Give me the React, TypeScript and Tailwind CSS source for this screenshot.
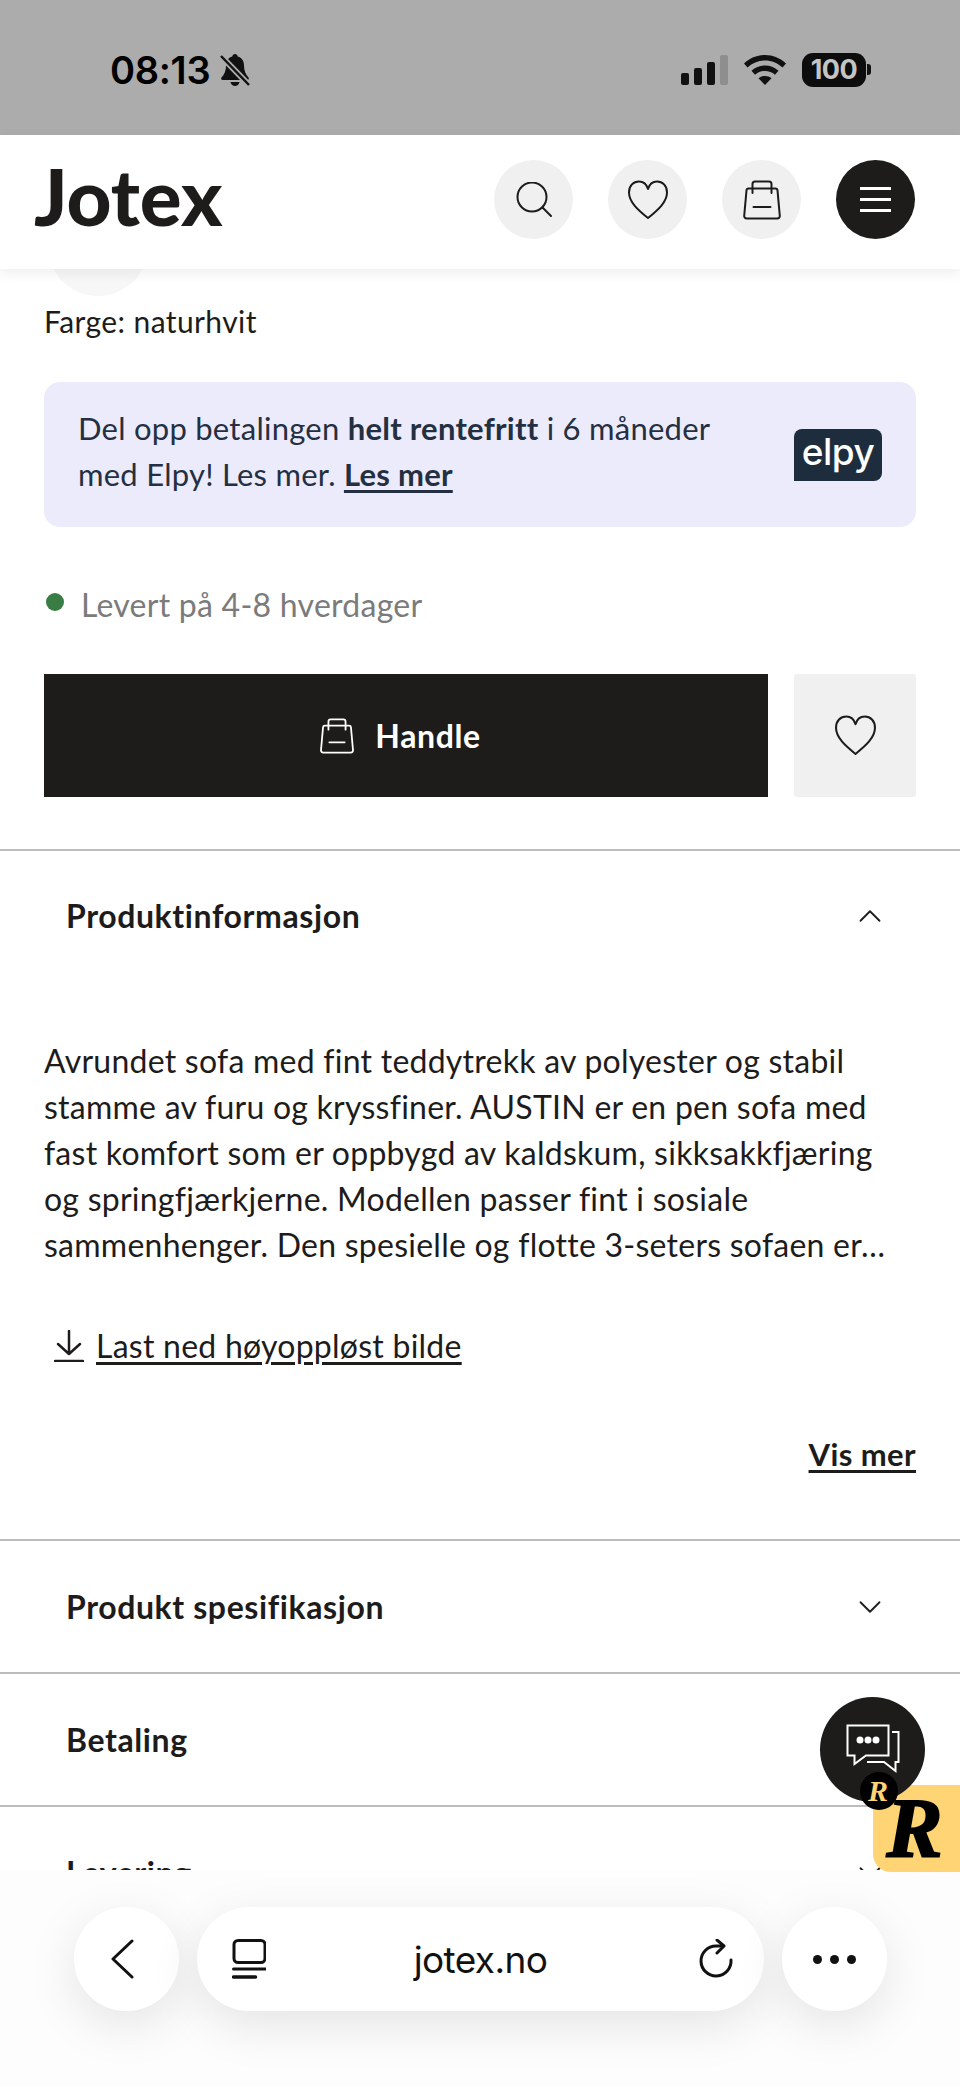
import { ChevronDown, ChevronUp } from 'lucide-react'

const Heart = ({ className }: { className?: string }) => (
  <svg viewBox="0 0 40 40" fill="none" stroke="currentColor" strokeWidth="2" strokeLinejoin="round" className={className}>
    <path d="M20 38C10 30 1 22 1 12.5 1 5.5 5.5 1.5 11 1.5c4.500 0 7.500 2.500 9 7.500 1.500-5 4.500-7.500 9-7.500 5.500 0 10 4 10 11C39 22 30 30 20 38Z" />
  </svg>
)

const Bag = ({ className }: { className?: string }) => (
  <svg viewBox="0 0 40 40" fill="none" stroke="currentColor" strokeWidth="2" strokeLinecap="round" strokeLinejoin="round" className={className}>
    <path d="M6.500 8.500h27a2 2 0 0 1 2 1.800l2.300 25.500a2.500 2.500 0 0 1-2.500 2.700H4.700a2.500 2.500 0 0 1-2.500-2.700L4.500 10.300a2 2 0 0 1 2-1.800Z" />
    <path d="M10.500 13V4a2.500 2.500 0 0 1 2.500-2.500h14a2.500 2.500 0 0 1 2.500 2.500v9" />
    <path d="M11.500 27h17" />
  </svg>
)

function StatusBar() {
  return (
    <div className="h-[135px] bg-[#acacac] flex items-center justify-between pl-[110px] pr-[89px] pt-[4px] text-black shrink-0">
      <div className="flex items-center gap-[9px]">
        <span className="text-[38px] font-semibold leading-none tracking-[-0.3px] font-['Inter',sans-serif]">08:13</span>
        <svg viewBox="0 0 32 34" className="w-[32px] h-[34px]" fill="#111">
          <path d="M16 1c-1.500 0-2.500 1-2.700 2.400C9 4.600 7 8 7 12.500c0 5-1.500 9-4.500 12-.8.900-.2 2.500 1 2.500h25c1.200 0 1.800-1.600 1-2.500-3-3-4.500-7-4.500-12 0-4.500-2-7.900-6.300-9.100C18.500 2 17.500 1 16 1Z" />
          <path d="M11.500 29c.5 2.500 2.300 4 4.500 4s4-1.500 4.500-4Z" />
          <path d="M2 3l28 29" stroke="#acacac" strokeWidth="6" />
          <path d="M2 3l28 29" stroke="#111" strokeWidth="2.500" />
        </svg>
      </div>
      <div className="flex items-center">
        <div className="flex items-end gap-[5px] h-[30px]">
          <div className="w-[8px] h-[12px] bg-[#111] rounded-[2px]" />
          <div className="w-[8px] h-[17px] bg-[#111] rounded-[2px]" />
          <div className="w-[8px] h-[23px] bg-[#111] rounded-[2px]" />
          <div className="w-[8px] h-[30px] bg-[#8e8e8e] rounded-[2px]" />
        </div>
        <svg viewBox="0 0 42 30" className="w-[42px] h-[30px] ml-[16px]" fill="#111">
          <path d="M21 0C13 0 6 3 0 8.500l3.500 4C8.500 8 14.500 5.500 21 5.500S33.500 8 38.500 12.500l3.500-4C36 3 29 0 21 0Z" />
          <path d="M21 10.500c-5 0-9.500 1.800-13.500 5.200l3.500 4c2.800-2.400 6.200-3.700 10-3.700s7.200 1.300 10 3.700l3.500-4C30.500 12.300 26 10.500 21 10.500Z" />
          <path d="M21 21c-2.500 0-4.800.8-6.500 2.300L21 30l6.500-6.700C25.800 21.800 23.500 21 21 21Z" />
        </svg>
        <div className="flex items-center ml-[16px]">
          <div className="w-[64px] h-[34px] rounded-[11px] bg-[#0d0d0d] flex items-center justify-center text-[#c4c4c4] text-[27px] font-bold leading-none font-['Inter',sans-serif] tracking-[-0.5px]">
            100
          </div>
          <div className="w-[4px] h-[11px] bg-[#111] rounded-r-[3px] ml-[1px]" />
        </div>
      </div>
    </div>
  )
}

function Header() {
  return (
    <div className="relative z-10 h-[134px] bg-white shadow-[0_4px_12px_rgba(0,0,0,0.07)] flex items-center justify-between pl-[34px] pr-[45px] pb-[5px] shrink-0">
      <span className="text-[78px] font-black leading-none text-[#1d1c1b] mb-[8px] font-['Lato',sans-serif]">Jotex</span>
      <div className="flex items-center gap-[35px] text-[#1d1c1b]">
        <button className="w-[79px] h-[79px] rounded-full bg-[#f0f0f0] flex items-center justify-center">
          <svg viewBox="0 0 36 36" fill="none" stroke="currentColor" strokeWidth="2" strokeLinecap="round" className="w-[36px] h-[36px]">
            <circle cx="16" cy="15" r="14.500" />
            <path d="M26.500 25.500L35 34" />
          </svg>
        </button>
        <button className="w-[79px] h-[79px] rounded-full bg-[#f0f0f0] flex items-center justify-center">
          <Heart className="w-[40px] h-[40px]" />
        </button>
        <button className="w-[79px] h-[79px] rounded-full bg-[#f0f0f0] flex items-center justify-center">
          <Bag className="w-[40px] h-[40px]" />
        </button>
        <button className="w-[79px] h-[79px] rounded-full bg-[#1d1c1b] flex flex-col items-center justify-center gap-[8px]">
          <div className="w-[31px] h-[3px] bg-white" />
          <div className="w-[31px] h-[3px] bg-white" />
          <div className="w-[31px] h-[3px] bg-white" />
        </button>
      </div>
    </div>
  )
}

function AccordionRow({ title }: { title: string }) {
  return (
    <div className="h-[133px] border-t-2 border-[#bcbcbc] flex items-center justify-between pl-[66px] pr-[71px]">
      <span className="text-[32px] font-bold tracking-[0.6px] text-[#1d1c1b]">{title}</span>
      <ChevronDown className="w-[38px] h-[38px] text-[#1d1c1b]" strokeWidth={1.150} />
    </div>
  )
}

function BottomBar() {
  return (
    <div className="absolute left-0 right-0 bottom-0 h-[216px] bg-[#fdfdfd] z-20 flex items-start gap-[18px] pl-[74px] pt-[37px] text-[#111]">
      <button className="w-[105px] h-[104px] rounded-full bg-white shadow-[0_14px_50px_rgba(0,0,0,0.1)] flex items-center justify-center">
        <svg viewBox="0 0 24 40" fill="none" stroke="currentColor" strokeWidth="3" strokeLinecap="round" strokeLinejoin="round" className="w-[24px] h-[40px] mr-[10px]">
          <path d="M22 2L3 20l19 18" />
        </svg>
      </button>
      <div className="w-[567px] h-[104px] rounded-full bg-white shadow-[0_14px_50px_rgba(0,0,0,0.1)] flex items-center justify-between pl-[35px] pr-[31px]">
        <svg viewBox="0 0 34 40" fill="none" stroke="currentColor" strokeWidth="3" strokeLinecap="round" className="w-[34px] h-[40px]">
          <rect x="2" y="1.500" width="31" height="22" rx="4" />
          <path d="M1.500 30h32" />
          <path d="M1.500 38h22" strokeWidth="3.500" />
        </svg>
        <span className="text-[37px] leading-none font-['Inter',sans-serif] tracking-[-0.6px] mr-[4px]">jotex.no</span>
        <svg viewBox="0 0 34 40" fill="none" stroke="currentColor" strokeWidth="3" strokeLinecap="round" strokeLinejoin="round" className="w-[34px] h-[40px]">
          <path d="M32 21A15 15 0 1 1 17 7h7" />
          <path d="M18 1l7 6-7 7" />
        </svg>
      </div>
      <button className="w-[105px] h-[104px] rounded-full bg-white shadow-[0_14px_50px_rgba(0,0,0,0.1)] flex items-center justify-center gap-[8px]">
        <div className="w-[9px] h-[9px] rounded-full bg-[#111]" />
        <div className="w-[9px] h-[9px] rounded-full bg-[#111]" />
        <div className="w-[9px] h-[9px] rounded-full bg-[#111]" />
      </button>
    </div>
  )
}

function ChatWidget() {
  return (
    <>
      <div className="absolute z-30 left-[873px] top-[1785px] w-[87px] h-[87px] bg-[#fed475] rounded-bl-[18px] flex items-center justify-center">
        <span className="text-[84px] leading-none font-bold italic text-black [-webkit-text-stroke:2px_black] font-['Liberation_Serif',serif] pr-[4px]">R</span>
      </div>
      <div className="absolute z-30 left-[820px] top-[1697px] w-[105px] h-[105px] rounded-full bg-[#1d1c1b] flex items-center justify-center">
        <svg viewBox="0 0 54 50" fill="none" stroke="white" strokeWidth="2" className="w-[54px] h-[50px] mb-[2px]">
          <path d="M1.500 1.500h41v30H20L8.500 40V31.500h-7Z" />
          <path d="M46 8h6.500v30H49.500v9L38 38H21" />
          <circle cx="14" cy="16" r="3.500" fill="white" stroke="none" />
          <circle cx="22" cy="16" r="3.500" fill="white" stroke="none" />
          <circle cx="30" cy="16" r="3.500" fill="white" stroke="none" />
        </svg>
      </div>
      <div className="absolute z-30 left-[860px] top-[1772px] w-[38px] h-[38px] rounded-full bg-black flex items-center justify-center">
        <span className="text-[30px] leading-none font-bold italic text-[#fed475] font-['Liberation_Serif',serif] pr-[2px]">R</span>
      </div>
    </>
  )
}

export default function App() {
  return (
    <div className="relative w-[960px] h-[2086px] overflow-hidden bg-white flex flex-col font-['Lato',sans-serif] text-[#1d1c1b]">
      <StatusBar />
      <Header />

      <main className="flex-1">
        <div className="px-[44px]">
          <div className="w-[100px] h-[100px] mt-[-73px] ml-[4px] rounded-full bg-[#f7f7f7]" />
          <p className="text-[30px] leading-[40px] tracking-[0.4px] mt-[5px]">Farge: naturhvit</p>

          <div className="mt-[41px] h-[145px] rounded-[16px] bg-[#ecebfc] flex items-center justify-between pl-[34px] pr-[34px] text-[#243041]">
            <p className="text-[31px] leading-[46px] tracking-[0.25px] mb-[8px]">
              Del opp betalingen <strong>helt rentefritt</strong> i 6 måneder
              <br />
              med Elpy! Les mer. <strong className="underline underline-offset-4">Les mer</strong>
            </p>
            <div className="w-[88px] h-[52px] rounded-[8px] rounded-bl-none bg-[#1e2d3d] flex items-center justify-center text-white text-[37px] leading-none font-medium pb-[6px] tracking-[-0.5px] font-['Inter',sans-serif]">
              elpy
            </div>
          </div>

          <div className="mt-[58px] flex items-center h-[40px] gap-[17px]">
            <div className="w-[18px] h-[18px] ml-[2px] mb-[6px] rounded-full bg-[#3a7d44]" />
            <span className="text-[32px] leading-[40px] tracking-[0.25px] text-[#7b7b7b]">Levert på 4-8 hverdager</span>
          </div>

          <div className="mt-[49px] flex gap-[26px] h-[123px]">
            <button className="w-[724px] bg-[#1d1c1b] text-white flex items-center justify-center gap-[20px] pr-[12px]">
              <Bag className="w-[36px] h-[36px]" />
              <span className="text-[32px] font-bold tracking-[0.6px]">Handle</span>
            </button>
            <button className="flex-1 bg-[#f0f0f0] rounded-[3px] flex items-center justify-center">
              <Heart className="w-[41px] h-[41px]" />
            </button>
          </div>
        </div>

        <div className="mt-[52px] border-t-2 border-[#bcbcbc]">
          <div className="h-[133px] flex items-center justify-between pl-[66px] pr-[71px] pb-[3px]">
            <span className="text-[32px] font-bold tracking-[0.6px]">Produktinformasjon</span>
            <ChevronUp className="w-[38px] h-[38px]" strokeWidth={1.150} />
          </div>

          <div className="px-[44px] mt-[54px]">
            <p className="text-[32px] leading-[46px] tracking-[0.25px] whitespace-nowrap">
              Avrundet sofa med fint teddytrekk av polyester og stabil
              <br />
              stamme av furu og kryssfiner. AUSTIN er en pen sofa med
              <br />
              fast komfort som er oppbygd av kaldskum, sikksakkfjæring
              <br />
              og springfjærkjerne. Modellen passer fint i sosiale
              <br />
              sammenhenger. Den spesielle og flotte 3-seters sofaen er…
            </p>

            <div className="mt-[58px] flex items-center gap-[12px] h-[40px]">
              <svg viewBox="0 0 30 32" fill="none" stroke="currentColor" strokeWidth="2.500" strokeLinecap="round" strokeLinejoin="round" className="w-[30px] h-[32px] ml-[10px]">
                <path d="M15 1v23M4 14l11 10 11-10M1 31h28" />
              </svg>
              <span className="text-[32px] tracking-[0.25px] underline underline-offset-4">Last ned høyoppløst bilde</span>
            </div>

            <div className="mt-[68px] flex justify-end">
              <span className="text-[31px] leading-[40px] tracking-[0.4px] font-bold underline underline-offset-4">Vis mer</span>
            </div>
          </div>
        </div>

        <div className="mt-[65px]">
          <AccordionRow title="Produkt spesifikasjon" />
          <AccordionRow title="Betaling" />
          <AccordionRow title="Levering" />
        </div>
      </main>

      <ChatWidget />
      <BottomBar />
    </div>
  )
}
